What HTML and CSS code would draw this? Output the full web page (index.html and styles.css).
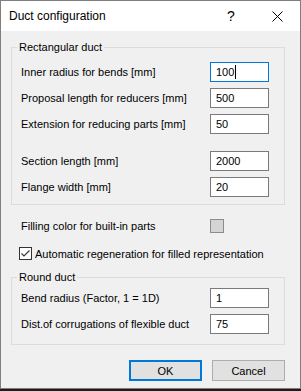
FILE: index.html
```html
<!DOCTYPE html>
<html lang="en">
<head>
    <meta charset="UTF-8">
    <meta name="viewport" content="width=device-width, initial-scale=1.0">
    <title>Duct configuration</title>
    <link rel="stylesheet" href="styles.css">
</head>
<body>
    <div class="window">
        <div class="titlebar">
            <span class="title">Duct configuration</span>
            <span class="caption-btn help">?</span>
            <span class="caption-btn close">
                <svg width="11" height="11" viewBox="0 0 11 11">
                    <path d="M0.5 0.5 L10.5 10.5 M10.5 0.5 L0.5 10.5" stroke="#000" stroke-width="1" fill="none"/>
                </svg>
            </span>
        </div>

        <div class="content">
            <fieldset class="group rect">
                <legend>Rectangular duct</legend>
                <div class="rows">
                    <div class="row">
                        <span class="label">Inner radius for bends [mm]</span>
                        <div class="field focused">100<span class="caret"></span></div>
                    </div>
                    <div class="row">
                        <span class="label">Proposal length for reducers [mm]</span>
                        <div class="field">500</div>
                    </div>
                    <div class="row">
                        <span class="label">Extension for reducing parts [mm]</span>
                        <div class="field">50</div>
                    </div>
                    <div class="row spaced">
                        <span class="label">Section length [mm]</span>
                        <div class="field">2000</div>
                    </div>
                    <div class="row">
                        <span class="label">Flange width [mm]</span>
                        <div class="field">20</div>
                    </div>
                </div>
            </fieldset>

            <div class="color-row">
                <span class="label">Filling color for built-in parts</span>
                <span class="swatch"></span>
            </div>

            <div class="check-row">
                <span class="checkbox">
                    <svg width="11" height="11" viewBox="0 0 11 11">
                        <path d="M1.5 5.5 L4 8 L9.5 2.5" stroke="#333" stroke-width="1.1" fill="none"/>
                    </svg>
                </span>
                <span class="label">Automatic regeneration for filled representation</span>
            </div>

            <fieldset class="group round">
                <legend>Round duct</legend>
                <div class="rows">
                    <div class="row">
                        <span class="label">Bend radius (Factor, 1 = 1D)</span>
                        <div class="field">1</div>
                    </div>
                    <div class="row">
                        <span class="label">Dist.of corrugations of flexible duct</span>
                        <div class="field">75</div>
                    </div>
                </div>
            </fieldset>

            <div class="buttons">
                <button class="btn default">OK</button>
                <button class="btn">Cancel</button>
            </div>
        </div>
    </div>
</body>
</html>
```

FILE: styles.css
```css
body {
    margin: 0;
    width: 301px;
    height: 391px;
    background-color: #1c1c1c;
    font-family: 'Liberation Sans', Arial, sans-serif;
    font-size: 11px;
    color: #000;
}

.window {
    box-sizing: border-box;
    width: 301px;
    height: 389px;
    border: 1px solid #7f7f7f;
    background-color: #f0f0f0;
}

.titlebar {
    display: flex;
    align-items: center;
    height: 30px;
    background-color: #fff;
    padding-left: 8px;
}

.title {
    flex: 1;
    font-size: 12px;
}

.caption-btn {
    display: flex;
    align-items: center;
    justify-content: center;
    width: 46px;
    height: 30px;
}

.help {
    font-size: 14px;
}

.label {
    white-space: nowrap;
}

.content {
    padding: 8px 15px 0 10px;
}

.group {
    margin: 0;
    border: 1px solid #dcdcdc;
    padding: 7px 15px 7px 9px;
    min-width: 0;
}

.group legend {
    padding: 0 2px;
    margin-left: -4px;
    line-height: 16px;
}

.rows {
    display: grid;
    gap: 6px;
}

.row {
    display: flex;
    align-items: center;
    justify-content: space-between;
    height: 20px;
}

.row.spaced {
    margin-top: 11px;
}

.field {
    box-sizing: border-box;
    flex-shrink: 0;
    width: 59px;
    height: 20px;
    border: 1px solid #7a7a7a;
    background-color: #fff;
    padding: 0 5px;
    line-height: 18px;
    display: flex;
    align-items: center;
}

.field.focused {
    border-color: #0078d7;
}

.caret {
    display: inline-block;
    width: 1px;
    height: 14px;
    margin-left: 1px;
    background-color: #000;
}

.color-row {
    display: flex;
    align-items: center;
    height: 14px;
    margin-top: 14px;
    padding-left: 10px;
}

.color-row .label {
    width: 189px;
}

.swatch {
    box-sizing: border-box;
    width: 14px;
    height: 14px;
    border: 1px solid #8c8c8c;
    background-color: #d4d4d4;
}

.check-row {
    display: flex;
    align-items: center;
    height: 13px;
    margin-top: 14px;
    padding-left: 8px;
}

.checkbox {
    box-sizing: border-box;
    flex-shrink: 0;
    display: flex;
    align-items: center;
    justify-content: center;
    width: 13px;
    height: 13px;
    border: 1px solid #333;
    background-color: #fff;
    margin-right: 3px;
}

.group.round {
    margin-top: 9px;
    padding-top: 3px;
    padding-bottom: 10px;
}

.buttons {
    display: flex;
    justify-content: flex-end;
    gap: 10px;
    margin-top: 15px;
}

.btn {
    box-sizing: border-box;
    width: 73px;
    height: 21px;
    font-family: inherit;
    font-size: 11px;
    color: #000;
    background-color: #e1e1e1;
    border: 1px solid #adadad;
    padding: 0;
}

.btn.default {
    border: 2px solid #0078d7;
}
```
